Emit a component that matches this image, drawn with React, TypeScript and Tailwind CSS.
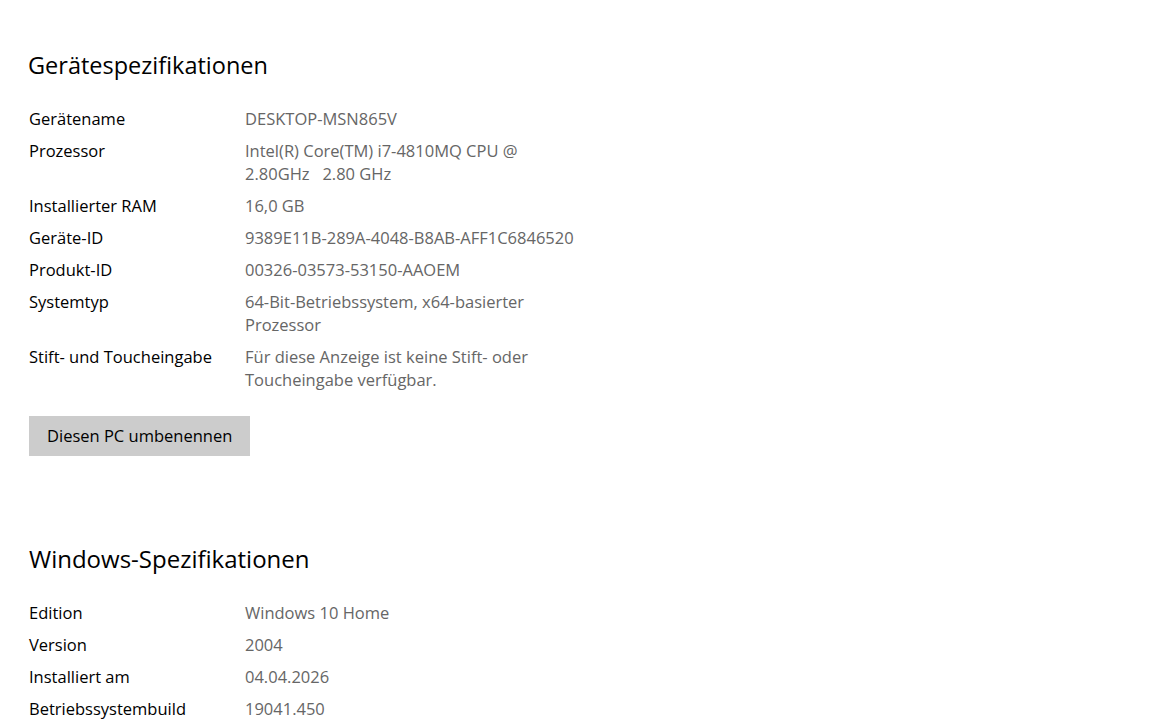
type Row = { label: string; value: string[] };

const device: Row[] = [
  { label: "Gerätename", value: ["DESKTOP-MSN865V"] },
  { label: "Prozessor", value: ["Intel(R) Core(TM) i7-4810MQ CPU @", "2.80GHz   2.80 GHz"] },
  { label: "Installierter RAM", value: ["16,0 GB"] },
  { label: "Geräte-ID", value: ["9389E11B-289A-4048-B8AB-AFF1C6846520"] },
  { label: "Produkt-ID", value: ["00326-03573-53150-AAOEM"] },
  { label: "Systemtyp", value: ["64-Bit-Betriebssystem, x64-basierter", "Prozessor"] },
  { label: "Stift- und Toucheingabe", value: ["Für diese Anzeige ist keine Stift- oder", "Toucheingabe verfügbar."] },
];

const windows: Row[] = [
  { label: "Edition", value: ["Windows 10 Home"] },
  { label: "Version", value: ["2004"] },
  { label: "Installiert am", value: ["04.04.2026"] },
  { label: "Betriebssystembuild", value: ["19041.450"] },
];

function SpecList({ rows }: { rows: Row[] }) {
  return (
    <div className="flex flex-col gap-[9px]">
      {rows.map((r) => (
        <div key={r.label} className="flex text-[16.5px] leading-[23px]">
          <div className="w-[216px] shrink-0 text-black">{r.label}</div>
          <div className="text-[#666666] whitespace-pre">
            {r.value.map((line) => (
              <div key={line}>{line}</div>
            ))}
          </div>
        </div>
      ))}
    </div>
  );
}

export default function App() {
  return (
    <div
      className="min-h-[727px] w-full bg-white pl-[29px] pt-[49px]"
      style={{ fontFamily: '"Segoe UI", "Open Sans", "Noto Sans", sans-serif' }}
    >
      <h1 className="-ml-px text-[23.5px] leading-[32px] font-normal text-black">Gerätespezifikationen</h1>
      <div className="mt-[26px]">
        <SpecList rows={device} />
      </div>
      <button className="mt-[25px] flex h-[40px] w-[221px] items-center bg-[#cccccc] pl-[18px] text-[16.5px] text-black">
        Diesen PC umbenennen
      </button>
      <h2 className="mt-[87px] text-[24px] leading-[32px] font-normal text-black">Windows-Spezifikationen</h2>
      <div className="mt-[26px]">
        <SpecList rows={windows} />
      </div>
    </div>
  );
}
